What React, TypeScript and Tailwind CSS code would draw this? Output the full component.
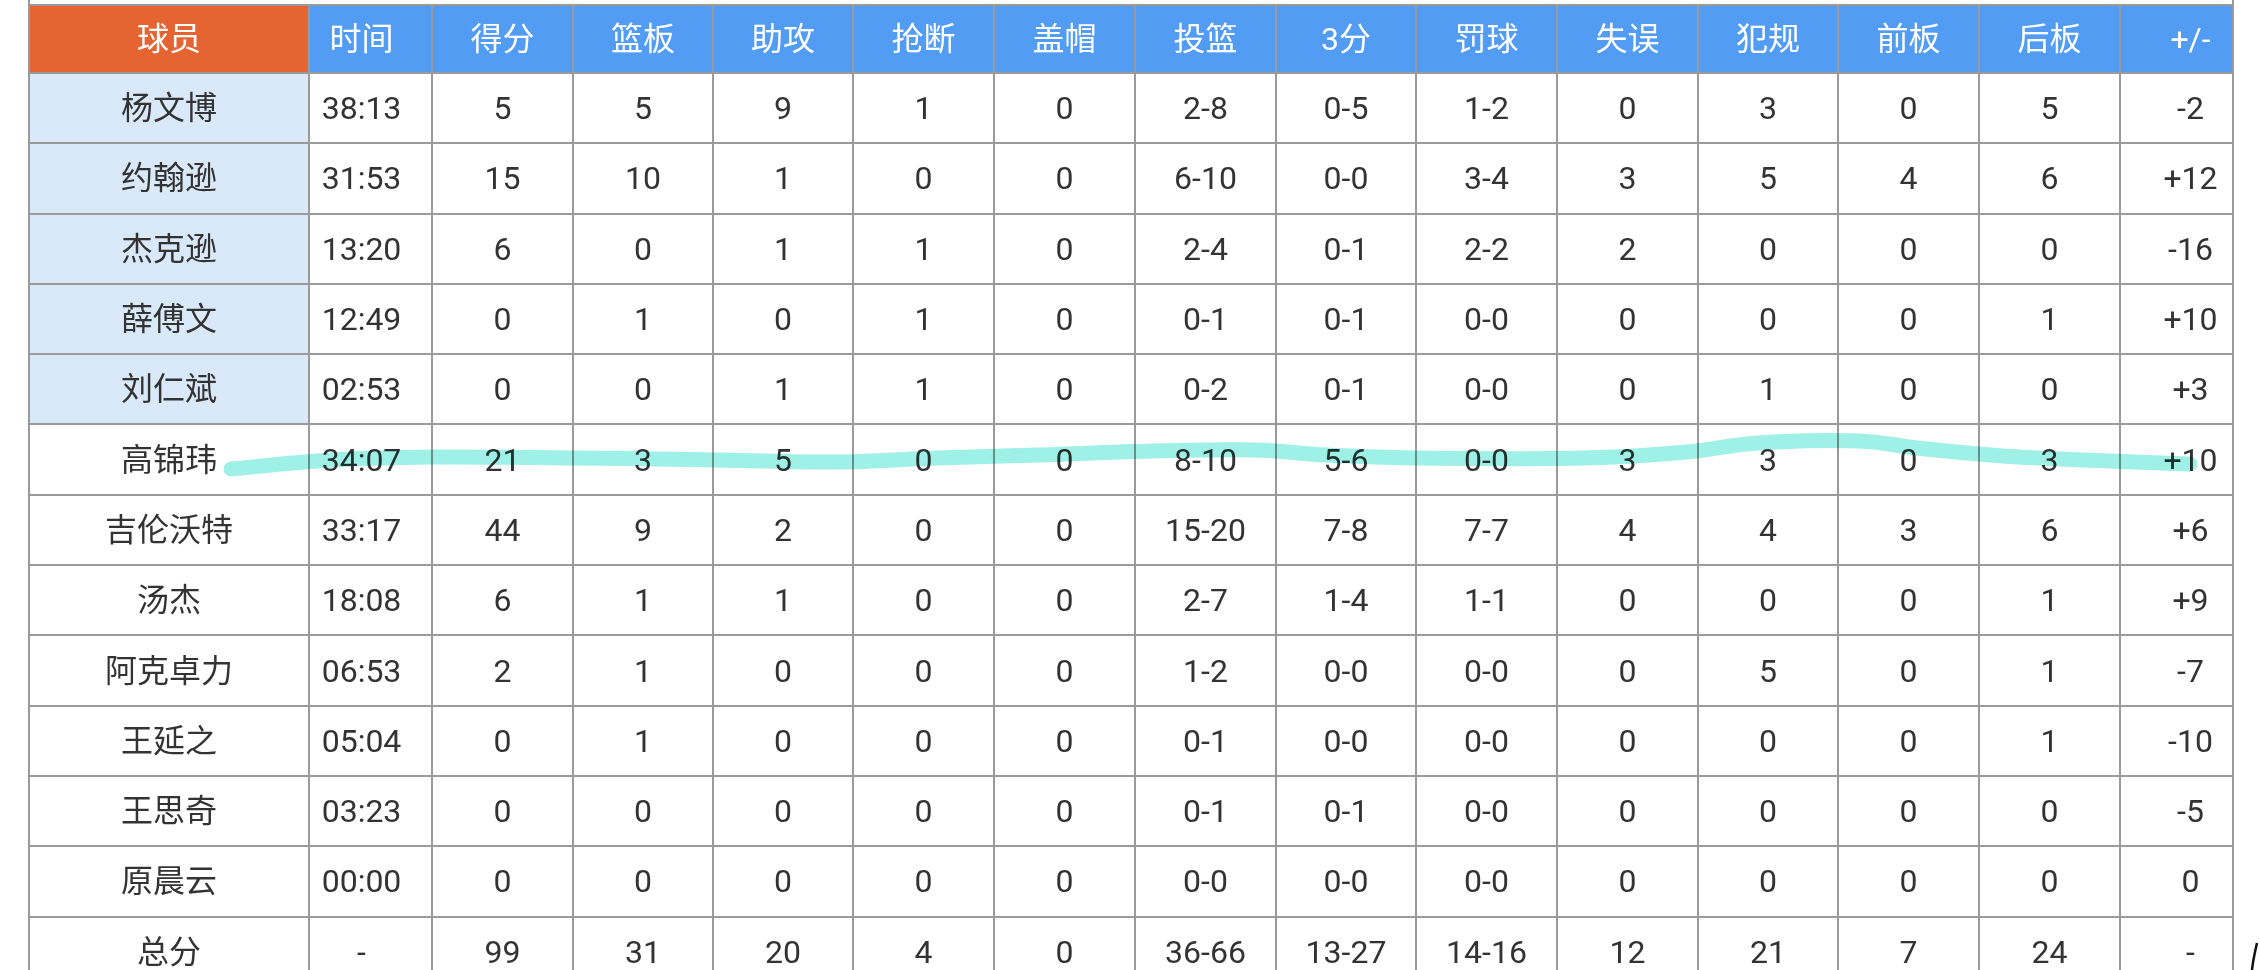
const headers = ["球员", "时间", "得分", "篮板", "助攻", "抢断", "盖帽", "投篮", "3分", "罚球", "失误", "犯规", "前板", "后板", "+/-"]

const widths = ["w-[280px]", "w-[123px]", "w-[141px]", "w-[140px]", "w-[140px]", "w-[141px]", "w-[141px]", "w-[141px]", "w-[140px]", "w-[141px]", "w-[141px]", "w-[140px]", "w-[141px]", "w-[141px]", "w-[113px]"]

// extra nudges so text sits where the original puts it
const pads = ["", "pr-[18px]", "", "", "", "", "", "", "", "", "", "", "", "", "pl-[28px]"]

const rows = [
  ["杨文博", "38:13", "5", "5", "9", "1", "0", "2-8", "0-5", "1-2", "0", "3", "0", "5", "-2"],
  ["约翰逊", "31:53", "15", "10", "1", "0", "0", "6-10", "0-0", "3-4", "3", "5", "4", "6", "+12"],
  ["杰克逊", "13:20", "6", "0", "1", "1", "0", "2-4", "0-1", "2-2", "2", "0", "0", "0", "-16"],
  ["薛傅文", "12:49", "0", "1", "0", "1", "0", "0-1", "0-1", "0-0", "0", "0", "0", "1", "+10"],
  ["刘仁斌", "02:53", "0", "0", "1", "1", "0", "0-2", "0-1", "0-0", "0", "1", "0", "0", "+3"],
  ["高锦玮", "34:07", "21", "3", "5", "0", "0", "8-10", "5-6", "0-0", "3", "3", "0", "3", "+10"],
  ["吉伦沃特", "33:17", "44", "9", "2", "0", "0", "15-20", "7-8", "7-7", "4", "4", "3", "6", "+6"],
  ["汤杰", "18:08", "6", "1", "1", "0", "0", "2-7", "1-4", "1-1", "0", "0", "0", "1", "+9"],
  ["阿克卓力", "06:53", "2", "1", "0", "0", "0", "1-2", "0-0", "0-0", "0", "5", "0", "1", "-7"],
  ["王延之", "05:04", "0", "1", "0", "0", "0", "0-1", "0-0", "0-0", "0", "0", "0", "1", "-10"],
  ["王思奇", "03:23", "0", "0", "0", "0", "0", "0-1", "0-1", "0-0", "0", "0", "0", "0", "-5"],
  ["原晨云", "00:00", "0", "0", "0", "0", "0", "0-0", "0-0", "0-0", "0", "0", "0", "0", "0"],
  ["总分", "-", "99", "31", "20", "4", "0", "36-66", "13-27", "14-16", "12", "21", "7", "24", "-"],
]

// hand-drawn marker line over the 高锦玮 row
const marker: [number, number][] = [
  [231, 469], [331, 460], [432, 457], [576, 458], [720, 460], [836, 462], [937, 458],
  [1038, 455], [1153, 451], [1254, 450], [1326, 455], [1412, 458], [1585, 458],
  [1686, 452], [1758, 443], [1859, 441], [1917, 448], [2018, 457], [2190, 464],
]

function smoothPath(pts: [number, number][]) {
  let d = `M${pts[0][0]} ${pts[0][1]}`
  for (let i = 0; i < pts.length - 1; i++) {
    const p0 = pts[i - 1] || pts[i]
    const p1 = pts[i]
    const p2 = pts[i + 1]
    const p3 = pts[i + 2] || p2
    const c1x = p1[0] + (p2[0] - p0[0]) / 6
    const c1y = p1[1] + (p2[1] - p0[1]) / 6
    const c2x = p2[0] - (p3[0] - p1[0]) / 6
    const c2y = p2[1] - (p3[1] - p1[1]) / 6
    d += ` C${c1x} ${c1y} ${c2x} ${c2y} ${p2[0]} ${p2[1]}`
  }
  return d
}

function Highlight() {
  return (
    <svg className="pointer-events-none absolute left-0 top-0 mix-blend-multiply" width="2260" height="970">
      <path d={smoothPath(marker)} fill="none" stroke="#9ff0e6" strokeWidth="15" strokeLinecap="round" strokeLinejoin="round" />
    </svg>
  )
}

export default function App() {
  return (
    <div className="relative h-[970px] w-[2260px] overflow-hidden bg-white font-['Roboto','Noto_Sans_CJK_SC',sans-serif] text-[32px] text-[#333]">
      <div className="ml-[28px] flex w-[2206px] flex-col border-l-2 border-[#9a9a9a]">
        <div className="flex h-[6px]">
          {widths.map((w, i) => (
            <div key={i} className={`${w} shrink-0 border-b-2 ${i === 14 ? "border-r-2" : ""} border-[#9a9a9a]`} />
          ))}
        </div>
        <div className="flex h-[68px]">
          {headers.map((h, i) => (
            <div
              key={h}
              className={`${widths[i]} ${pads[i]} flex shrink-0 items-center justify-center border-r-2 border-b-2 border-[#9a9a9a] text-white ${i === 0 ? "bg-[#e66432]" : "bg-[#529cf4]"}`}
            >
              {h}
            </div>
          ))}
        </div>
        {rows.map((r, ri) => (
          <div key={ri} className="flex h-[70.3px]">
            {r.map((c, i) => (
              <div
                key={i}
                className={`${widths[i]} ${pads[i]} flex shrink-0 items-center justify-center border-r-2 border-b-2 border-[#9a9a9a] ${i === 0 && ri < 5 ? "bg-[#d9e9fa]" : ""}`}
              >
                {c}
              </div>
            ))}
          </div>
        ))}
      </div>
      <Highlight />
      <svg className="absolute left-[2240px] top-[940px]" width="20" height="30">
        <path d="M17 3 C 15 12, 13 20, 12 30" fill="none" stroke="#111" strokeWidth="2.5" />
      </svg>
    </div>
  )
}
